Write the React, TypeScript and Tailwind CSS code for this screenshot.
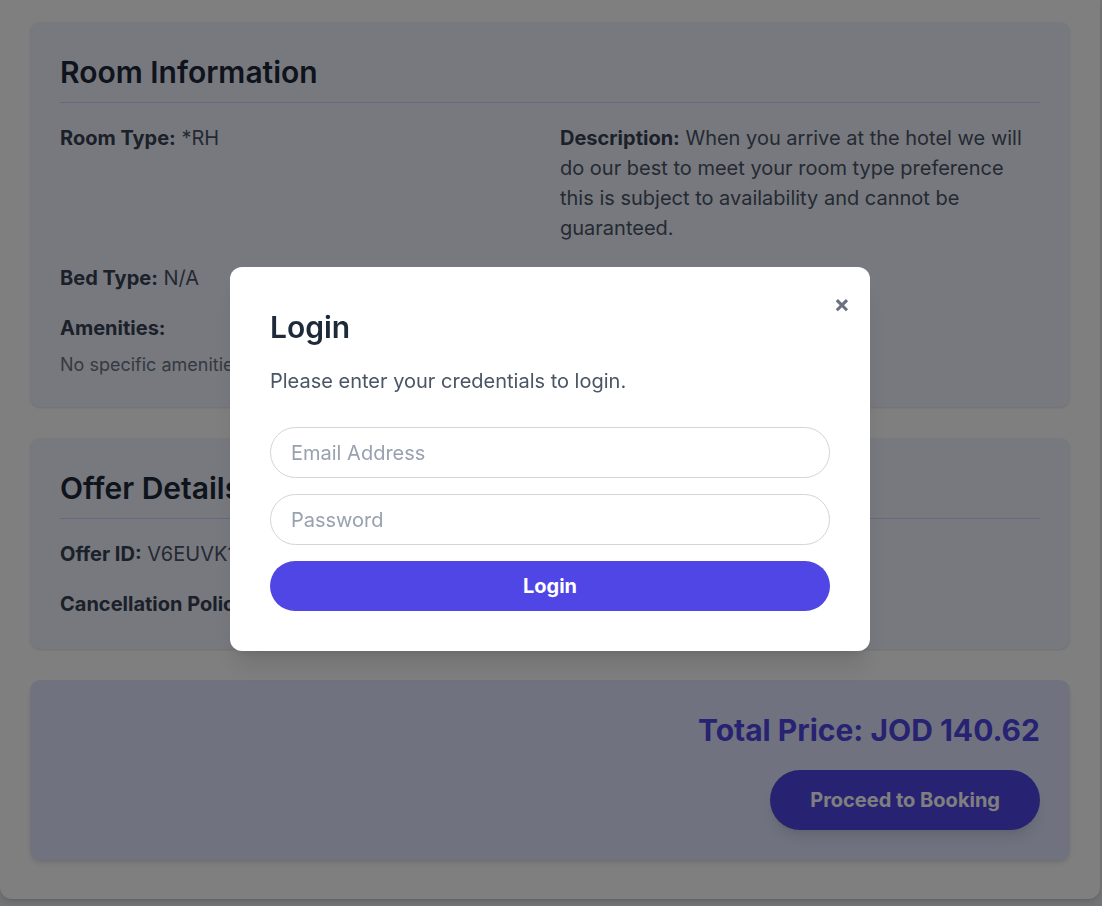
import React from 'react';

function Field({ label, value }: { label: string; value: string }) {
  return (
    <p className="text-xl leading-[30px] text-gray-600">
      <span className="font-bold text-gray-700">{label}</span> {value}
    </p>
  );
}

export default function App() {
  return (
    <div className="h-screen overflow-hidden bg-gray-200 font-['Inter',sans-serif]">
      <div className="w-[1100px] bg-white rounded-b-xl shadow-md px-[30px] pt-[22px] pb-[39px] flex flex-col gap-[31px]">
        {/* Room info */}
        <section className="bg-[#eef2ff] rounded-[10px] shadow-sm p-[30px]">
          <h2 className="text-3xl leading-10 font-semibold text-gray-800 pb-2.5 border-b border-[#c7d2fe] mb-5">
            Room Information
          </h2>
          <div className="grid grid-cols-2 gap-5">
            <Field label="Room Type:" value="*RH" />
            <Field
              label="Description:"
              value="When you arrive at the hotel we will do our best to meet your room type preference this is subject to availability and cannot be guaranteed."
            />
            <Field label="Bed Type:" value="N/A" />
            <div />
            <div className="col-span-2">
              <p className="text-xl leading-[30px] font-bold text-gray-700">Amenities:</p>
              <p className="mt-2.5 text-lg leading-6 text-gray-500">No specific amenities listed.</p>
            </div>
          </div>
        </section>

        {/* Offer details */}
        <section className="bg-[#eef2ff] rounded-[10px] shadow-sm p-[30px]">
          <h2 className="text-3xl leading-10 font-semibold text-gray-800 pb-2.5 border-b border-[#c7d2fe] mb-5">
            Offer Details
          </h2>
          <div className="flex flex-col gap-5">
            <Field label="Offer ID:" value="V6EUVK1QZ8" />
            <Field label="Cancellation Policy:" value="Non-refundable" />
          </div>
        </section>

        {/* Price */}
        <section className="bg-[#e0e7ff] rounded-[10px] shadow-md p-[30px] flex flex-col items-end">
          <p className="text-3xl leading-10 font-bold text-[#4f46e5]">Total Price: JOD 140.62</p>
          <button className="mt-5 h-[60px] px-10 rounded-full bg-[#4f46e5] text-white text-xl font-bold shadow-lg">
            Proceed to Booking
          </button>
        </section>
      </div>

      {/* Login modal */}
      <div className="fixed inset-0 bg-black/50 flex items-center justify-center">
        <div className="relative mt-3 mr-0.5 w-[640px] bg-white rounded-xl shadow-xl p-10">
          <button className="absolute top-[21px] right-5 text-2xl leading-8 font-bold text-gray-500">
            ×
          </button>
          <h3 className="text-3xl leading-10 font-semibold text-gray-800 mb-5">Login</h3>
          <p className="text-xl leading-7 text-gray-600 mb-8">Please enter your credentials to login.</p>
          <div className="flex flex-col gap-4">
            <input
              type="email"
              placeholder="Email Address"
              className="h-[51px] w-full rounded-full border border-gray-300 px-5 text-xl text-gray-700 placeholder:text-gray-400 outline-none"
            />
            <input
              type="password"
              placeholder="Password"
              className="h-[51px] w-full rounded-full border border-gray-300 px-5 text-xl text-gray-700 placeholder:text-gray-400 outline-none"
            />
            <button className="h-[50px] w-full rounded-full bg-[#4f46e5] text-white text-xl font-bold">
              Login
            </button>
          </div>
        </div>
      </div>
    </div>
  );
}
